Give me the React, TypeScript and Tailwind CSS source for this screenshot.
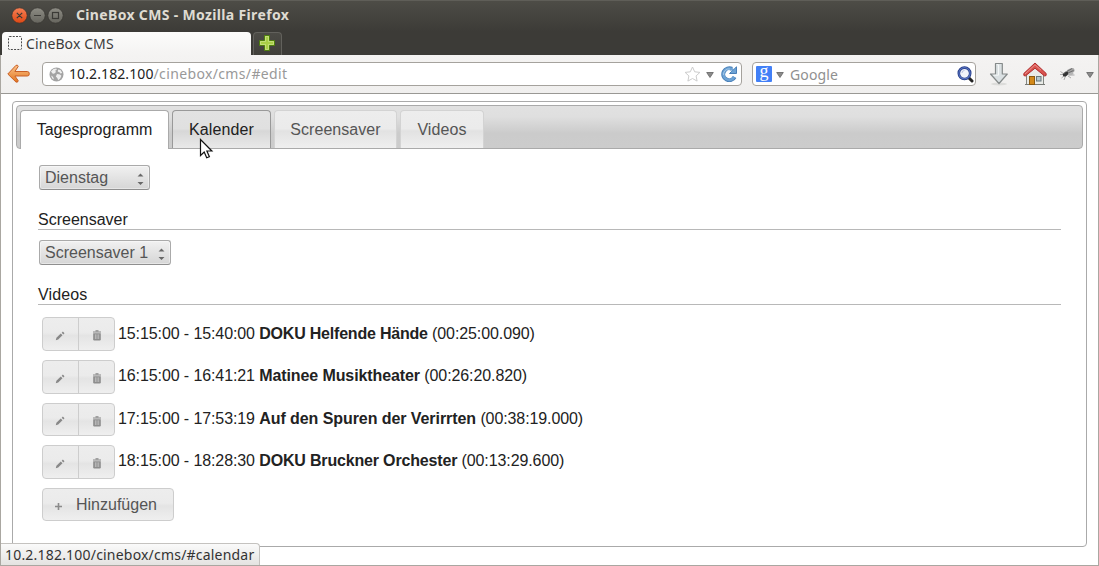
import React from "react";

const UI = "font-['Noto_Sans','Open_Sans',sans-serif]";
const WEB = "font-['Liberation_Sans',Arial,sans-serif]";

function TitleBar() {
  return (
    <div className="flex h-8 items-center border-t border-[#5f5e58] bg-gradient-to-b from-[#4d4c46] to-[#3c3b37] pl-[11px] pb-[4px]">
      <svg width="54" height="18" viewBox="0 0 54 18" className="shrink-0">
        <defs>
          <linearGradient id="close" x1="0" y1="0" x2="0" y2="1">
            <stop offset="0" stopColor="#f78055" />
            <stop offset="1" stopColor="#dd4814" />
          </linearGradient>
          <linearGradient id="grey" x1="0" y1="0" x2="0" y2="1">
            <stop offset="0" stopColor="#8d8c84" />
            <stop offset="1" stopColor="#66655e" />
          </linearGradient>
        </defs>
        <circle cx="8.500" cy="9.500" r="7.700" fill="url(#close)" stroke="#33322e" strokeWidth=".7" />
        <circle cx="26.500" cy="9.500" r="7.700" fill="url(#grey)" stroke="#33322e" strokeWidth=".7" />
        <circle cx="44.500" cy="9.500" r="7.700" fill="url(#grey)" stroke="#33322e" strokeWidth=".7" />
        <g stroke="#3b3a36" strokeWidth="1.200" fill="none">
          <path d="M5.800 6.800l5.400 5.400M11.200 6.800l-5.400 5.400M23 9.500h7" />
          <rect x="41.500" y="6.500" width="6" height="6" />
        </g>
      </svg>
      <span className={`${UI} ml-[11px] whitespace-nowrap text-[14px] font-bold leading-5 tracking-[0.34px] text-[#dfdbd2]`}>
        CineBox CMS - Mozilla Firefox
      </span>
    </div>
  );
}

function TabStrip() {
  return (
    <div className="flex h-[23px] bg-[#3c3b37] pl-[2px]">
      <div className="flex h-[23px] w-[249px] items-center rounded-t-[4px] bg-gradient-to-b from-[#fcfcfb] to-[#f4f3f2] pl-[6px]">
        <svg width="14" height="14" viewBox="0 0 14 14" className="-mt-px shrink-0">
          <rect x=".5" y=".5" width="13" height="13" rx="1" fill="none" stroke="#4b4b4b" strokeDasharray="2 1.25" />
        </svg>
        <span className={`${UI} ml-[4px] whitespace-nowrap text-[14px] leading-5 tracking-[0.1px] text-[#3c3c3c]`}>CineBox CMS</span>
      </div>
      <div className="ml-[2px] flex h-[23px] w-[29px] items-center justify-center rounded-t-[4px] border border-b-0 border-[#62615c] bg-gradient-to-b from-[#4b4a45] to-[#403f3a] pb-[2px] pr-[2px]">
        <svg width="16" height="16" viewBox="0 0 16 16">
          <path d="M5.500.5h5v5h5v5h-5v5h-5v-5h-5v-5h5z" fill="#a9cf46" stroke="#4e7d0e" />
          <path d="M6.500 1.500h3v5h5v3h-5v5h-3v-5h-5v-3h5z" fill="#a9cf46" stroke="#c9e285" strokeWidth=".8" />
        </svg>
      </div>
    </div>
  );
}

function DropTriangle() {
  return (
    <svg width="8" height="6" viewBox="0 0 8 6" className="shrink-0">
      <path d="M.7.5h6.600L4 5.500z" fill="#8b8b8b" stroke="#626262" strokeWidth=".8" />
    </svg>
  );
}

function BackIcon() {
  return (
    <svg width="24" height="20" viewBox="0 0 24 20" className="shrink-0">
      <defs>
        <linearGradient id="back" x1="0" y1="0" x2="0" y2="1">
          <stop offset="0" stopColor="#fbc48c" />
          <stop offset="1" stopColor="#e2751c" />
        </linearGradient>
      </defs>
      <path
        d="M.8 10L9 1.300q1.900-.7 2.200 1.200L7.900 7.500H20.300q2 0 2 2.300t-2 2.200H7.900l3.300 4.700q-.2 2-2.200 1.400z"
        fill="url(#back)"
        stroke="#c95f26"
        strokeLinejoin="round"
      />
    </svg>
  );
}

function GlobeIcon() {
  return (
    <svg width="15" height="15" viewBox="0 0 15 15" className="shrink-0">
      <circle cx="7.500" cy="7.500" r="7" fill="#a3a3a3" />
      <path d="M2 4.500L4.500 2l2.800-.5.5 1.300-1.600 1 .8 1.200-2 1.800L3.500 6.500zM9 2.500l2.500.5 1.800 3-2 .4-1-1.400-1.500-.3zM8 7l3 .5 1.400 1.300-1.200 2.600-2 1.900-.9-2.400-1.500-1.500zM2 8.500l2 1.200 1 2.800-1.700-1z" fill="#eee" />
    </svg>
  );
}

function ReloadIcon() {
  return (
    <svg width="16" height="16" viewBox="0 0 16 16" className="shrink-0">
      <path d="M13.600 11A6 6 0 1 1 11 2.900" fill="none" stroke="#4a80b8" strokeWidth="4" />
      <path d="M15.500.8v6.700H8.500L10.700 5.300 13.200 3z" fill="#6ea3d5" stroke="#4a80b8" strokeLinejoin="round" />
      <path d="M13.200 11A5.700 5.700 0 1 1 12 4" fill="none" stroke="#6ea3d5" strokeWidth="2.600" />
      <path d="M2.500 9a5.500 5.500 0 0 1 6.500-6" fill="none" stroke="#a5c9e8" strokeWidth="1" />
    </svg>
  );
}

function SearchIcon() {
  return (
    <svg width="17" height="17" viewBox="0 0 17 17" className="shrink-0">
      <path d="M11.500 11.500l3.500 3.500" stroke="#222" strokeWidth="3" strokeLinecap="round" />
      <circle cx="7.500" cy="7.300" r="5.700" fill="#f1f3fa" stroke="#223a88" strokeWidth="2.600" />
      <circle cx="7.500" cy="7.300" r="5.600" fill="none" stroke="#5872bd" strokeWidth="1.200" />
      <path d="M5 7a2.500 2.500 0 0 1 2.500-2.500" stroke="#bcc4df" fill="none" />
    </svg>
  );
}

function DownloadIcon() {
  return (
    <svg width="20" height="24" viewBox="0 0 20 24" className="shrink-0">
      <ellipse cx="10" cy="22" rx="8" ry="1.500" fill="#dcdcda" />
      <path d="M6.500 1.500h6.800v10.500h5L10 21.500 1.500 12h5z" fill="#dbe1e3" stroke="#858a8a" strokeWidth="1.200" strokeLinejoin="round" />
      <path d="M7.700 2.700h1.800v10.500H4.500" stroke="#f5f8f8" fill="none" />
    </svg>
  );
}

function HomeIcon() {
  return (
    <svg width="24" height="24" viewBox="0 0 24 24" className="shrink-0">
      <path d="M3.500 11.500L12 5l8.500 6.500v11h-17z" fill="#e9ebe7" stroke="#838681" />
      <path d="M2 22.500h20" stroke="#777a75" />
      <rect x="6.500" y="14.500" width="5" height="8" fill="#d3891a" stroke="#8c5a10" />
      <rect x="13.500" y="14.500" width="4.500" height="4.500" fill="#b4c7cd" stroke="#69777b" />
      <path d="M12 1L.8 11.500q-.5 2.800 1.500 2.500L12 6.200 21.700 14q2 .3 1.500-2.500z" fill="#d9544f" stroke="#b12c2c" strokeLinejoin="round" />
      <path d="M2 12L12 2.800l6 5.400" fill="none" stroke="#ea908c" strokeWidth="1" />
    </svg>
  );
}

function FlyIcon() {
  return (
    <svg width="17" height="14" viewBox="0 0 17 14" className="shrink-0">
      <path d="M1 7.500h4M1.500 4.500L5 7M5 13l1.500-4M9 9l3 2M10 8l5.500 0M2.500 11L6 8" stroke="#999" strokeWidth=".8" />
      <ellipse cx="11.500" cy="4" rx="4.200" ry="2.500" transform="rotate(-22 11.500 4)" fill="#a4a4a4" />
      <ellipse cx="11" cy="6.800" rx="3.500" ry="1.400" transform="rotate(-10 11 6.800)" fill="#b5b5b5" />
      <path d="M8 4.500l5-3M9 6l5.500-2.500" stroke="#666" strokeWidth=".9" />
      <ellipse cx="6.500" cy="7" rx="3" ry="2.100" transform="rotate(-35 6.500 7)" fill="#333" />
      <path d="M4.500 6.500l2-1.500" stroke="#999" />
    </svg>
  );
}

function Toolbar() {
  return (
    <div className="flex h-[39px] items-start border-b border-[#999894] bg-gradient-to-b from-[#f4f3f2] to-[#f0efee] pl-[6px] pt-[7px]">
      <div className="mt-[2px] flex">
        <BackIcon />
      </div>
      <div className="ml-[11px] flex h-6 w-[700px] items-center rounded-[4px] border border-[#a5a29d] bg-white pl-[6px]">
        <GlobeIcon />
        <span className={`${UI} ml-[5px] whitespace-nowrap text-[14px] leading-5 tracking-[0.36px] text-[#999]`}>
          <span className="tracking-[0.1px] text-[#222]">10.2.182.100</span>/cinebox/cms/#edit
        </span>
        <div className="ml-auto flex items-center pr-[4px]">
          <svg width="17" height="16" viewBox="0 0 17 16">
            <path d="M8.500 1l2.200 4.800 5.200.6-3.800 3.500 1 5.200-4.600-2.600-4.600 2.600 1-5.200L1.100 6.400l5.200-.6z" fill="#fff" stroke="#ccc" strokeLinejoin="round" />
          </svg>
          <div className="ml-[5px] mr-[7px] mt-[2px] flex">
            <DropTriangle />
          </div>
          <ReloadIcon />
        </div>
      </div>
      <div className="ml-[10px] flex h-6 w-[224px] items-center rounded-[4px] border border-[#a5a29d] bg-white pl-[3px] pr-[1px]">
        <div className="flex h-4 w-4 items-center justify-center rounded-[1px] bg-[#4280f7]">
          <span className="-mt-[7px] font-['Liberation_Serif',serif] text-[18px] leading-[20px] text-white">g</span>
        </div>
        <div className="ml-[4px] mt-[2px] flex">
          <DropTriangle />
        </div>
        <span className={`${UI} ml-[6px] mt-px text-[14px] leading-5 tracking-[0.15px] text-[#909090]`}>Google</span>
        <div className="ml-auto flex">
          <SearchIcon />
        </div>
      </div>
      <div className="ml-[13px] flex">
        <DownloadIcon />
      </div>
      <div className="ml-[14px] flex">
        <HomeIcon />
      </div>
      <div className="ml-[12px] mt-[5px] flex">
        <FlyIcon />
      </div>
      <div className="ml-[10px] mt-[10px] flex">
        <DropTriangle />
      </div>
    </div>
  );
}

function Tab({ label, className }: { label: string; className: string }) {
  return (
    <div className={`flex shrink-0 justify-center whitespace-nowrap rounded-t-[4px] border border-b-0 pt-[9px] text-[16px] leading-[20px] ${className}`}>
      {label}
    </div>
  );
}

const idleTab =
  "h-[38px] border-[#d3d3d3] bg-[linear-gradient(to_bottom,#ededed_0,#ebebeb_48%,#e2e2e2_54%,#efefef_100%)] text-[#555]";
const buttonFill = "border-[#cdcdcd] bg-[linear-gradient(to_bottom,#ededed_0,#ebebeb_45%,#e4e4e4_55%,#efefef_100%)]";

function Select({ value, className }: { value: string; className: string }) {
  return (
    <div
      className={`ml-px flex h-[25px] items-center justify-between rounded-[3px] border border-[#aaa] border-b-[#8f8f8f] bg-gradient-to-b from-[#f1f1f1] to-[#d6d6d6] pl-[5px] pr-[5px] text-[16px] leading-5 text-[#555] shadow-[inset_0_0_0_1px_rgba(255,255,255,0.4)] ${className}`}
    >
      <span className="whitespace-nowrap">{value}</span>
      <svg width="7" height="14" viewBox="0 0 7 14" className="mt-[3px] shrink-0">
        <path d="M.5 4.500L3.500 1.500l3 3zM.5 10h6l-3 3z" fill="#686868" />
      </svg>
    </div>
  );
}

function Heading({ children, className }: { children: React.ReactNode; className: string }) {
  return <h2 className={`h-[21px] border-b border-[#b8b8b8] pt-px text-[16px] leading-[20px] text-[#222] ${className}`}>{children}</h2>;
}

function PencilIcon() {
  return (
    <svg width="10" height="10" viewBox="0 0 10 10">
      <path d="M.8 9.200l.6-2.400L5.800 2.500l1.700 1.700L3.200 8.600zM6.700 1.700L7.900.6l1.600 1.600-1.200 1.200z" fill="#888" />
    </svg>
  );
}

function TrashIcon() {
  return (
    <svg width="10" height="11" viewBox="0 0 10 11">
      <path d="M1 2h8M3.500.8h3" stroke="#888" strokeWidth="1.100" fill="none" />
      <path d="M1.200 3.300h7.600v6q0 1.200-1.200 1.200H2.400q-1.200 0-1.200-1.200z" fill="#8d8d8d" />
      <path d="M3.400 4.300v4.700M5 4.300v4.700M6.700 4.300v4.700" stroke="#d0d0d0" strokeWidth=".7" />
    </svg>
  );
}

const videos = [
  { time: "15:15:00 - 15:40:00", title: "DOKU Helfende Hände", length: "(00:25:00.090)", box: "h-[43px]", btn: "h-[34px]", text: "mt-[7px]", bold: "tracking-[-0.21px]" },
  { time: "16:15:00 - 16:41:21", title: "Matinee Musiktheater", length: "(00:26:20.820)", box: "h-[43px]", btn: "h-[34px]", text: "mt-[6px]", bold: "tracking-[-0.1px]" },
  { time: "17:15:00 - 17:53:19", title: "Auf den Spuren der Verirrten", length: "(00:38:19.000)", box: "h-[42px]", btn: "h-[33px]", text: "mt-[6px]", bold: "tracking-[-0.07px]" },
  { time: "18:15:00 - 18:28:30", title: "DOKU Bruckner Orchester", length: "(00:13:29.600)", box: "h-[43px]", btn: "h-[34px]", text: "mt-[6px]", bold: "tracking-[-0.17px]" },
];

function VideoRow({ v }: { v: (typeof videos)[number] }) {
  return (
    <div className={`flex items-start ${v.box}`}>
      <div className={`flex w-[73px] rounded-[4px] border ${v.btn} ${buttonFill}`}>
        <div className="flex w-[36px] items-center justify-center border-r border-[#cdcdcd] pr-px pt-[3px]">
          <PencilIcon />
        </div>
        <div className="flex flex-1 items-center justify-center pl-[1px] pt-[3px]">
          <TrashIcon />
        </div>
      </div>
      <p className={`ml-[3px] whitespace-nowrap text-[16px] leading-[20px] tracking-[-0.1px] text-[#222] ${v.text}`}>
        {v.time} <b className={v.bold}>{v.title}</b> {v.length}
      </p>
    </div>
  );
}

export default function App() {
  return (
    <div className="relative flex h-[566px] w-[1099px] flex-col overflow-hidden bg-[#3c3b37]">
      <TitleBar />
      <TabStrip />
      <div className="flex flex-1 flex-col border-x border-b border-[#aaa7a1] bg-white">
        <Toolbar />
        <main className={`${WEB} ml-[11px] mt-[7px] h-[446px] w-[1075px] rounded-[4px] border border-[#aaa] bg-white p-[3px]`}>
          <nav className="flex h-[44px] gap-[3px] rounded-[4px] border border-[#aaa] bg-[linear-gradient(to_bottom,#e1e1e1_0,#dfdfdf_25%,#cbcbcb_65%,#cccccc_100%)] pl-[3px] pt-[4px]">
            <Tab label="Tagesprogramm" className="h-[39px] w-[149px] border-[#aaa] bg-white text-[#212121]" />
            <Tab
              label="Kalender"
              className="h-[38px] w-[99px] border-[#999] bg-[linear-gradient(to_bottom,#e2e2e2_0,#e0e0e0_48%,#d7d7d7_54%,#e9e9e9_100%)] tracking-[0.12px] text-[#212121]"
            />
            <Tab label="Screensaver" className={`w-[123px] tracking-[0.05px] ${idleTab}`} />
            <Tab label="Videos" className={`w-[84px] tracking-[0.1px] ${idleTab}`} />
          </nav>
          <section className="ml-[22px] mr-[22px] pt-[16px]">
            <Select value="Dienstag" className="w-[111px]" />
            <Heading className="mt-[19px]">Screensaver</Heading>
            <div className="mt-[10px]">
              <Select value="Screensaver 1" className="w-[132px]" />
            </div>
            <Heading className="mt-[19px] tracking-[0.1px]">Videos</Heading>
            <div className="ml-[4px] mt-[12px]">
              {videos.map((v) => (
                <VideoRow key={v.time} v={v} />
              ))}
              <button className={`flex h-[33px] w-[132px] items-center rounded-[4px] border pl-[11px] text-[16px] text-[#555] ${buttonFill}`}>
                <svg width="9" height="9" viewBox="0 0 9 9" className="mt-[3px]">
                  <path d="M4.500 1v7M1 4.500h7" stroke="#8b8b8b" strokeWidth="1.600" />
                </svg>
                <span className="ml-[13px] leading-[20px]">Hinzufügen</span>
              </button>
            </div>
          </section>
        </main>
      </div>
      <div className={`${UI} absolute bottom-px left-px flex h-[22px] w-[259px] items-center whitespace-nowrap rounded-tr-[4px] border-r border-t border-[#c4c2bf] bg-gradient-to-b from-[#fafafa] to-[#e4e3e1] pl-[4px] text-[14px] leading-5 tracking-[0.2px] text-[#333]`}>
        10.2.182.100/cinebox/cms/#calendar
      </div>
      <svg className="absolute left-[199px] top-[138px]" width="16" height="24" viewBox="0 0 16 24">
        <path d="M1.500 1.500v16l3.700-3.500 2.500 5.800 2.700-1.100-2.500-5.700h5z" fill="#fff" stroke="#111" strokeWidth="1.200" />
      </svg>
    </div>
  );
}
